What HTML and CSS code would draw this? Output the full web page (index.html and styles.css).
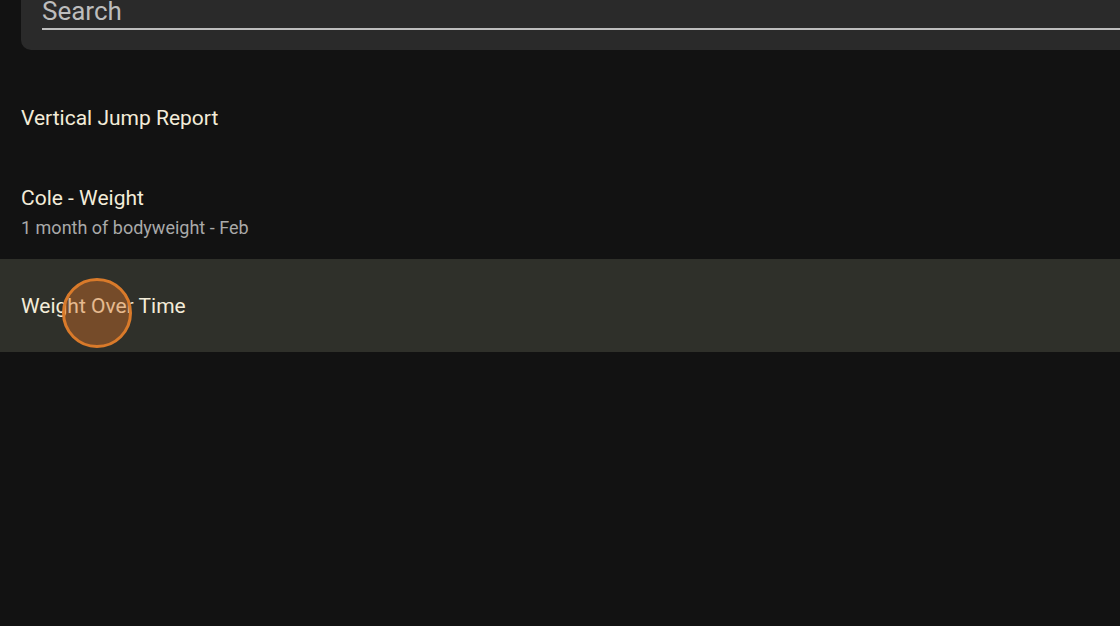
FILE: index.html
```html
<!DOCTYPE html>
<html>
<head>
<meta charset="utf-8">
<link rel="stylesheet" href="styles.css">
</head>
<body>
<div class="page">
  <div class="search-card">
    <div class="search-field"><span class="search-label">Search</span></div>
  </div>
  <ul class="list">
    <li class="item"><div class="title">Vertical Jump Report</div></li>
    <li class="item"><div class="title">Cole - Weight</div><div class="subtitle">1 month of bodyweight - Feb</div></li>
    <li class="item active"><div class="title">Weight Over Time</div><span class="tap"></span></li>
  </ul>
</div>
</body>
</html>
```
FILE: styles.css
```css
html, body {
  margin: 0;
  padding: 0;
  background: #121212;
  width: 1120px;
  height: 626px;
  overflow: hidden;
  font-family: Roboto, "Noto Sans", sans-serif;
}
.page {
  display: flex;
  flex-direction: column;
}
.search-card {
  margin-left: 21px;
  margin-top: -20px;
  height: 70px;
  background: #2a2a2a;
  border-radius: 0 0 0 10px;
  padding: 0 0 0 21px;
  box-sizing: border-box;
}
.search-field {
  height: 50px;
  border-bottom: 2px solid #bdbdbd;
  display: flex;
  align-items: flex-end;
  box-sizing: border-box;
}
.search-label {
  font-size: 26px;
  color: #bdbdbd;
  line-height: 30px;
  padding-bottom: 2px;
}
.list {
  list-style: none;
  margin: 23px 0 0 0;
  padding: 0;
}
.item {
  position: relative;
  height: 93px;
  padding: 0 21px;
  display: flex;
  flex-direction: column;
  justify-content: center;
  box-sizing: border-box;
}
.item:first-child {
  padding-bottom: 3px;
}
.title {
  font-size: 21px;
  color: #f3ecd9;
  line-height: 26px;
}
.subtitle {
  font-size: 18px;
  color: #a9a9a9;
  line-height: 26px;
  margin-top: 4px;
}
.item.active {
  background: #2f302a;
}
.tap {
  position: absolute;
  left: 62px;
  top: 19px;
  width: 64px;
  height: 64px;
  border-radius: 50%;
  border: 3px solid #d97a2a;
  background: rgba(215, 115, 40, 0.42);
}
```
